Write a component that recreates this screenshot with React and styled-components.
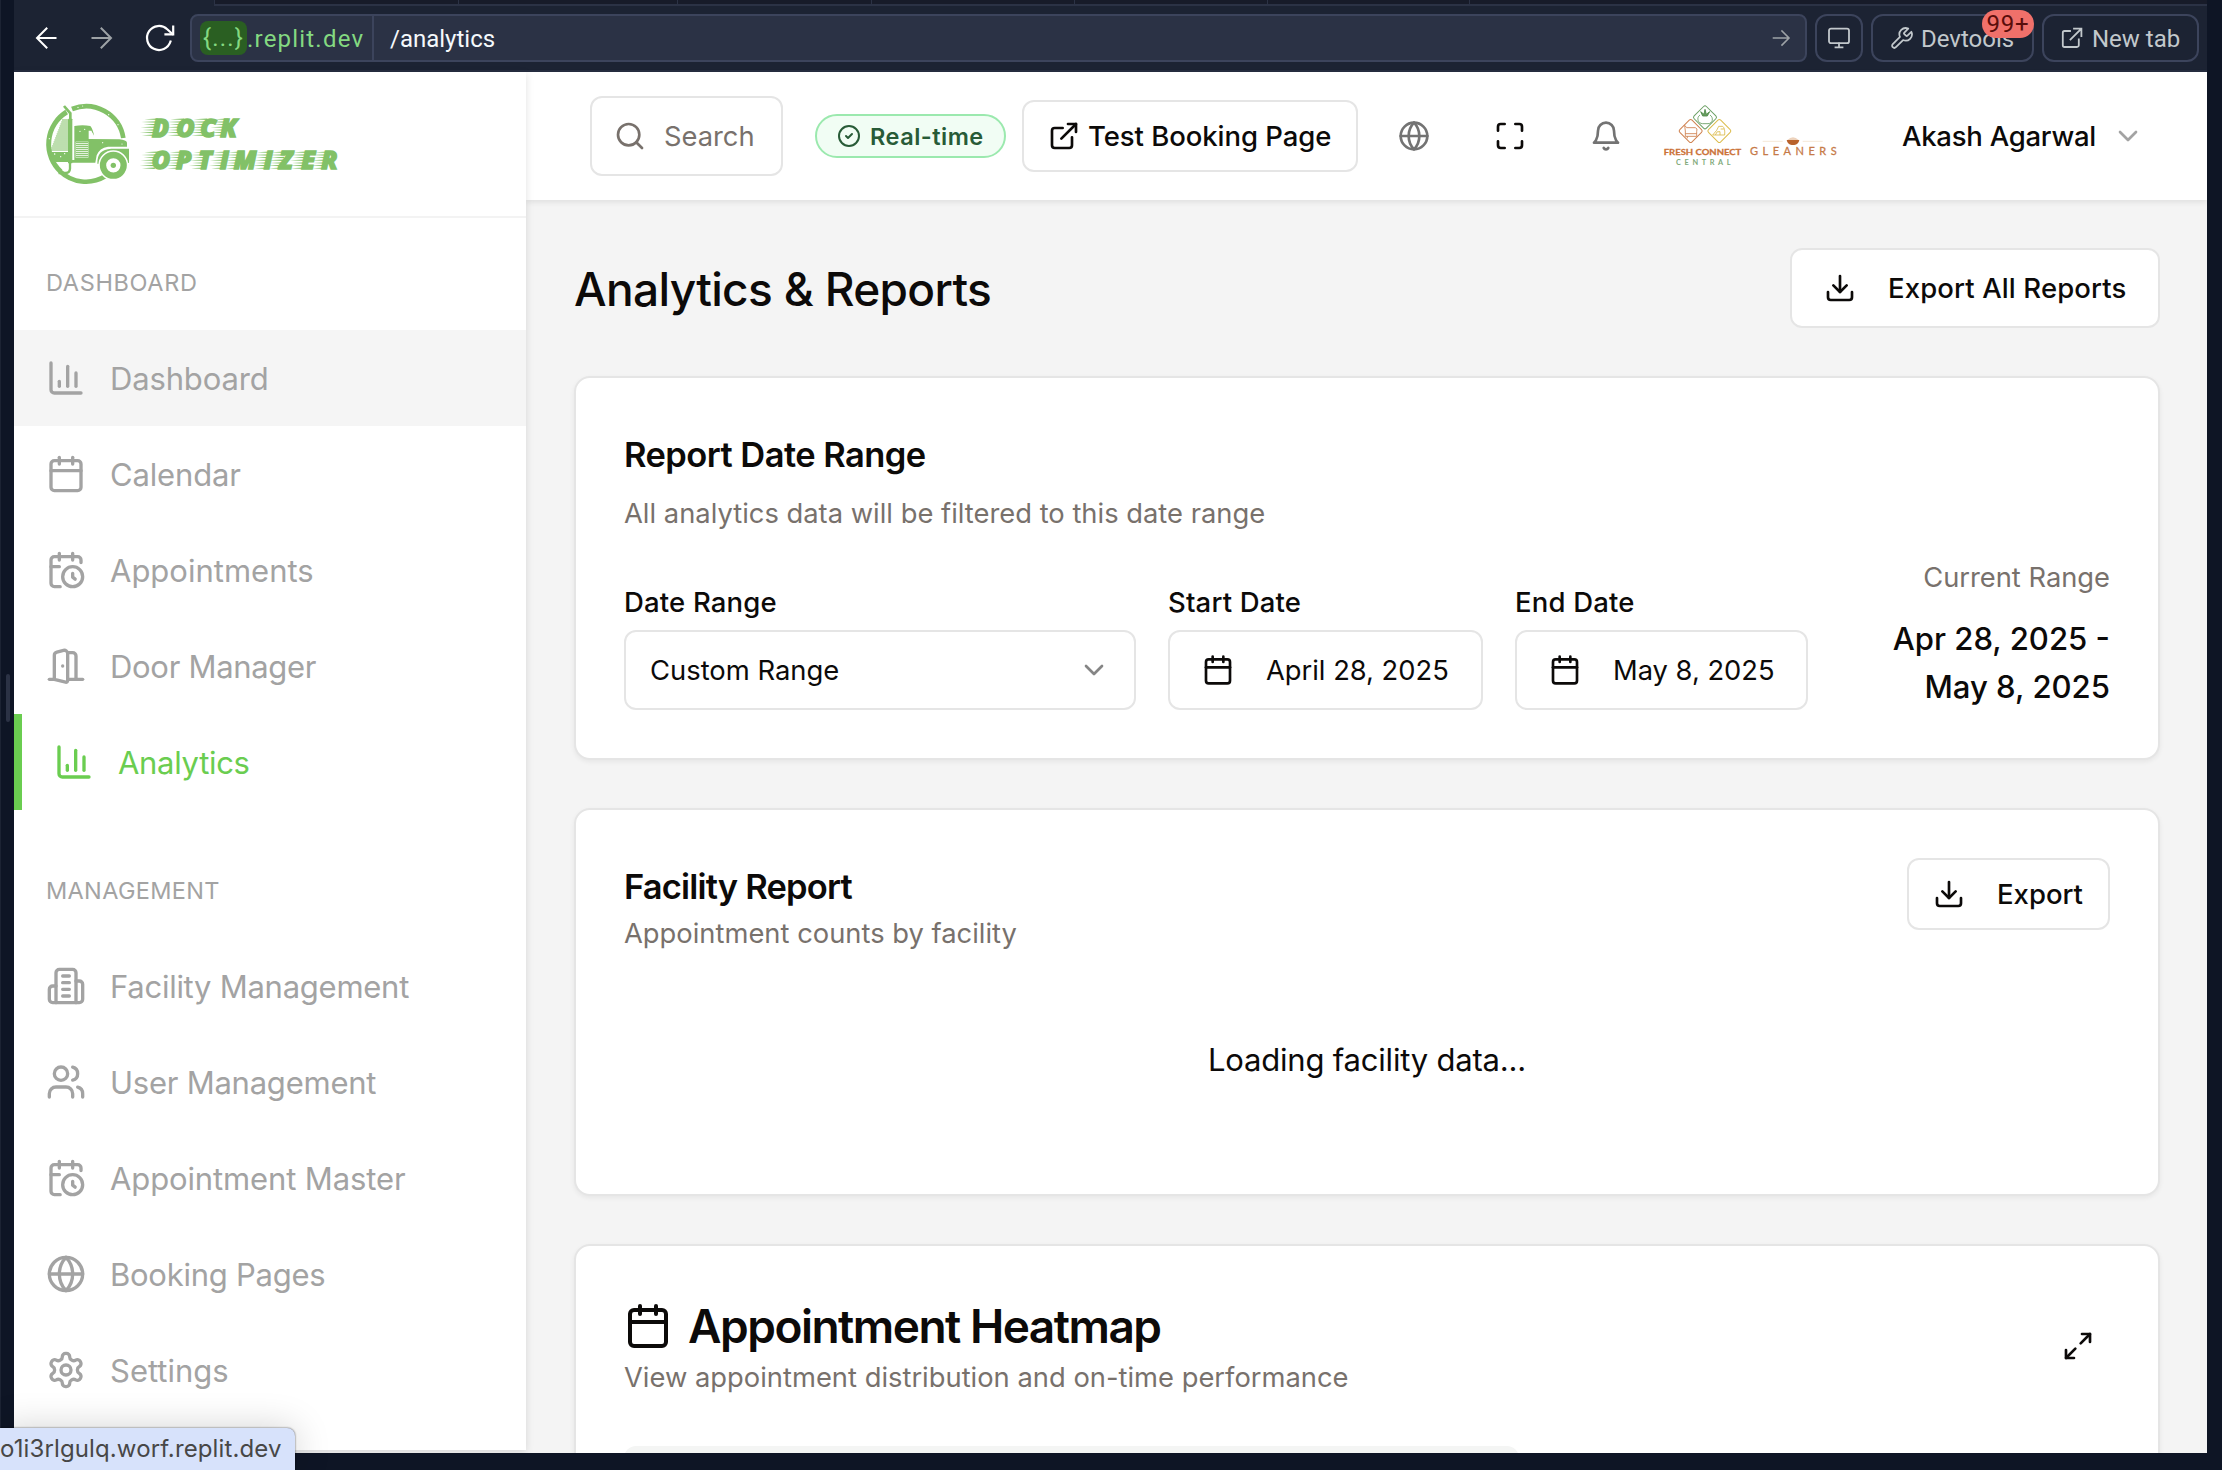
import React from 'react';
import styled, { createGlobalStyle } from 'styled-components';
import {
  Calendar,
  ChartColumn,
  ChevronDown,
  CircleCheck,
  Download,
  ExternalLink,
  Globe,
  Maximize,
  Maximize2,
  Search,
  Users,
} from 'lucide-react';

const GlobalStyle = createGlobalStyle`
  * { box-sizing: border-box; }
  html, body { margin: 0; padding: 0; overflow: hidden; background: #0e1525; }
  body {
    font-family: Inter, "Liberation Sans", sans-serif;
    color: #0c0a09;
    -webkit-font-smoothing: antialiased;
  }
  svg { display: block; flex: none; }
`;

/* ---------- icons ---------- */

const Stroke = ({ size = 32, width = 2, children }) => (
  <svg
    width={size}
    height={size}
    viewBox="0 0 24 24"
    fill="none"
    stroke="currentColor"
    strokeWidth={width}
    strokeLinecap="round"
    strokeLinejoin="round"
  >
    {children}
  </svg>
);

const DoorIcon = ({ size }) => (
  <Stroke size={size}>
    <path d="M13 4h3a2 2 0 0 1 2 2v14" />
    <path d="M2 20h3" />
    <path d="M13 20h9" />
    <path d="M10 12v.01" />
    <path d="M13 4.562v16.157a1 1 0 0 1-1.242.97L5 20V5.562a2 2 0 0 1 1.515-1.94l4-1A2 2 0 0 1 13 4.561Z" />
  </Stroke>
);

const BuildingIcon = ({ size }) => (
  <Stroke size={size}>
    <path d="M6 22V4a2 2 0 0 1 2-2h8a2 2 0 0 1 2 2v18Z" />
    <path d="M6 12H4a2 2 0 0 0-2 2v6a2 2 0 0 0 2 2h2" />
    <path d="M18 9h2a2 2 0 0 1 2 2v9a2 2 0 0 1-2 2h-2" />
    <path d="M10 6h4M10 10h4M10 14h4M10 18h4" />
  </Stroke>
);

const CalendarClockIcon = ({ size }) => (
  <Stroke size={size}>
    <path d="M21 7.5V6a2 2 0 0 0-2-2H5a2 2 0 0 0-2 2v14a2 2 0 0 0 2 2h3.5" />
    <path d="M16 2v4M8 2v4M3 10h5" />
    <path d="M17.5 17.5 16 16.3V14" />
    <circle cx="16" cy="16" r="6" />
  </Stroke>
);

const GearIcon = ({ size }) => (
  <Stroke size={size}>
    <path d="M12.22 2h-.44a2 2 0 0 0-2 2v.18a2 2 0 0 1-1 1.73l-.43.25a2 2 0 0 1-2 0l-.15-.08a2 2 0 0 0-2.73.73l-.22.38a2 2 0 0 0 .73 2.73l.15.1a2 2 0 0 1 1 1.72v.51a2 2 0 0 1-1 1.74l-.15.09a2 2 0 0 0-.73 2.73l.22.38a2 2 0 0 0 2.73.73l.15-.08a2 2 0 0 1 2 0l.43.25a2 2 0 0 1 1 1.73V20a2 2 0 0 0 2 2h.44a2 2 0 0 0 2-2v-.18a2 2 0 0 1 1-1.73l.43-.25a2 2 0 0 1 2 0l.15.08a2 2 0 0 0 2.73-.73l.22-.39a2 2 0 0 0-.73-2.73l-.15-.08a2 2 0 0 1-1-1.74v-.5a2 2 0 0 1 1-1.74l.15-.09a2 2 0 0 0 .73-2.73l-.22-.38a2 2 0 0 0-2.73-.73l-.15.08a2 2 0 0 1-2 0l-.43-.25a2 2 0 0 1-1-1.73V4a2 2 0 0 0-2-2z" />
    <circle cx="12" cy="12" r="3" />
  </Stroke>
);

const BellIcon = () => (
  <Stroke size={32}>
    <path d="M6 8a6 6 0 0 1 12 0c0 7 3 9 3 9H3s3-2 3-9" />
    <path d="M10.3 21a1.94 1.94 0 0 0 3.4 0" />
  </Stroke>
);

const BarSvg = ({ w = 24, h = 24, children, sw = 2 }) => (
  <svg
    width={w}
    height={h}
    viewBox={`0 0 ${w} ${h}`}
    fill="none"
    stroke="currentColor"
    strokeWidth={sw}
    strokeLinecap="square"
    strokeLinejoin="miter"
  >
    {children}
  </svg>
);

const ArrowLeftIcon = () => (
  <BarSvg>
    <path d="M3.5 12H21.5M12.5 2.5 3 12l9.5 9.5" />
  </BarSvg>
);
const ArrowRightIcon = () => (
  <BarSvg>
    <path d="M2.5 12H20.5M11.5 2.5 21 12l-9.5 9.5" />
  </BarSvg>
);
const ReloadIcon = () => (
  <BarSvg w={32} h={30} sw={2.2}>
    <path d="M26.5 18.5A12 12 0 1 1 23.2 6.2L28.5 11" />
    <path d="M29.2 3.5V11.3H21.5" />
  </BarSvg>
);
const GoIcon = () => (
  <BarSvg w={20} h={18} sw={1.6}>
    <path d="M2.5 9H17.5M11 2l7 7-7 7" />
  </BarSvg>
);
const MonitorIcon = () => (
  <BarSvg w={24} h={22} sw={1.8}>
    <rect x="2" y="1.6" width="20" height="14.6" rx="2" />
    <path d="M12 16.5V20.2M8.5 20.3H15.5" />
  </BarSvg>
);
const WrenchIcon = () => (
  <Stroke size={25} width={1.7}>
    <path d="M14.7 6.3a1 1 0 0 0 0 1.4l1.6 1.6a1 1 0 0 0 1.4 0l3.77-3.77a6 6 0 0 1-7.94 7.94l-6.91 6.91a2.12 2.12 0 0 1-3-3l6.91-6.91a6 6 0 0 1 7.94-7.94l-3.76 3.76z" />
  </Stroke>
);
const NewTabIcon = () => (
  <BarSvg w={22} h={22} sw={1.8}>
    <path d="M9 4H3.5A1.8 1.8 0 0 0 1.8 5.8V18.2A1.8 1.8 0 0 0 3.5 20H16a1.8 1.8 0 0 0 1.8-1.8V12.5" />
    <path d="M13 1.6H20.4V9M20 2 9.5 12.5" />
  </BarSvg>
);

/* ---------- logos ---------- */

const GREEN = '#82c167';

const range = (from, to, step) => {
  const out = [];
  for (let v = from; v <= to; v += step) out.push(v);
  return out;
};

const SpeedLines = ({ starts, top }) => (
  <g>
    {starts.map((x) =>
      [0, 1, 2, 3, 4, 5, 6].map((i) => (
        <polygon
          key={`${x}-${i}`}
          fill={GREEN}
          points={`${x - 27 - (i % 2) * 8 - i * 1.2},${top + 4 + i * 8} ${x + 14 - i * 1.6},${top + 1.4 + i * 8} ${x + 14 - i * 1.6},${top + 6 + i * 8}`}
        />
      ))
    )}
  </g>
);

const LogoWord = ({ y, xs, children }) => (
  <text
    x={xs.join(' ')}
    y={y}
    fill={GREEN}
    stroke={GREEN}
    strokeWidth="4"
    fontFamily='"Open Sans", "Noto Sans", sans-serif'
    fontWeight="800"
    fontStyle="italic"
    fontSize="75"
  >
    {children}
  </text>
);

const DockLogo = () => (
  <svg width="320" height="100" viewBox="0 0 960 300">
    <g fill="none" stroke={GREEN}>
      <path d="M108 51A113 113 0 0 1 262 138" strokeWidth="14" />
      <path d="M92 60A113 113 0 0 0 74 239" strokeWidth="15" />
      <path d="M72 238A113 113 0 0 0 208 253" strokeWidth="14" />
      <path d="M84 42L103 64V84" strokeWidth="8" />
      <path d="M102 205V230Q101 243 90 243H68" strokeWidth="7" />
      {range(84, 176, 6).map((y) => (
        <path key={y} d={`M${78 - (y - 84) * 0.38} ${y}H96`} strokeWidth="3.2" />
      ))}
    </g>
    <path d="M42 180H98V210H60L48 206Z" fill={GREEN} />
    <rect x="96" y="80" width="13" height="134" rx="2" fill={GREEN} />
    <path d="M115 102Q140 98 163 102Q171 112 174 131L166 116H158V141L250 142Q271 144 273 152V164H216Q190 168 182 190L178 212H98V204H115Z" fill={GREEN} />
    <path d="M160 138L166 118L174 136Z" fill="#fff" />
    <rect x="119" y="149" width="38" height="48" fill="#fff" />
    <g stroke={GREEN} strokeWidth="3.4">
      {range(152, 194, 6).map((y) => (
        <path key={y} d={`M120 ${y}H156`} />
      ))}
    </g>
    <path d="M184 215Q182 172 226 170H279V212L274 214Q270 180 234 178Q197 180 190 215Z" fill={GREEN} />
    <circle cx="232" cy="220" r="45" fill="#fff" />
    <circle cx="232" cy="220" r="31" fill="none" stroke={GREEN} strokeWidth="19" />
    <circle cx="232" cy="220" r="8" fill={GREEN} />
    <g fill="#fff">
      <circle cx="126" cy="46" r="2" />
      <circle cx="140" cy="42" r="1.6" />
      <circle cx="218" cy="68" r="2" />
      <circle cx="246" cy="98" r="1.8" />
      <circle cx="56" cy="186" r="2.4" />
      <circle cx="74" cy="194" r="2" />
      <circle cx="86" cy="185" r="2" />
      <circle cx="40" cy="140" r="1.8" />
      <circle cx="132" cy="118" r="2" />
      <circle cx="146" cy="112" r="2" />
      <circle cx="200" cy="152" r="1.8" />
      <circle cx="258" cy="156" r="1.8" />
    </g>
    <SpeedLines starts={[352, 430, 500, 562]} top={78} />
    <SpeedLines starts={[352, 428, 500, 560, 604, 690, 734, 800, 864]} top={177} />
    <LogoWord y={134} xs={[348, 421, 493, 553]}>DOCK</LogoWord>
    <LogoWord y={232} xs={[347, 420, 487, 552, 593, 683, 730, 796, 856]}>OPTIMIZER</LogoWord>
  </svg>
);

const Diamond = ({ cx, cy, color }) => (
  <rect
    x={cx - 26}
    y={cy - 26}
    width="52"
    height="52"
    rx="6"
    transform={`rotate(45 ${cx} ${cy})`}
    fill="none"
    stroke={color}
    strokeWidth="3"
  />
);

const PartnerLogo = () => (
  <svg width="176" height="90" viewBox="36 0 528 270">
    <Diamond cx={165} cy={79} color="#6a9f63" />
    <Diamond cx={122} cy={120} color="#cf8250" />
    <Diamond cx={208} cy={120} color="#dcbc4c" />
    <g fill="none" strokeWidth="2.6">
      <path d="M150 72C138 80 144 98 158 98H174C188 98 192 80 180 72" stroke="#6a9f63" />
      <path d="M152 62L162 70L165 55L169 70L179 62L172 75H158Z" stroke="#4f8a49" fill="#6a9f63" />
      <path d="M104 103L110 110H136Q144 112 140 122V136H106V120ZM106 128H140M112 136V142" stroke="#cf8250" />
      <path d="M188 132L200 118L206 106H218Q226 112 224 132ZM196 132Q200 118 210 122V132M212 114H222" stroke="#dcbc4c" />
    </g>
    <text x="41" y="192" textLength="233" lengthAdjust="spacingAndGlyphs" fontFamily="Lato, sans-serif" fontWeight="700" fontSize="25" fill="#cb7237" stroke="#cb7237" strokeWidth="0.8">FRESH CONNECT</text>
    <text x="78" y="221" textLength="164" fontFamily="Lato, sans-serif" fontWeight="700" fontSize="22" fill="#7fa97a">CENTRAL</text>
    <path d="M338 151H398M458 151H518" stroke="#f3e3cf" strokeWidth="2.5" />
    <path d="M412 147Q429 130 446 147Z" fill="#edd3bd" />
    <path d="M410 147H448Q445 161 433 162H425Q413 161 410 147Z" fill="#b9622c" />
    <text x="300" y="192" textLength="260" fontFamily="Lato, sans-serif" fontSize="33" fill="#c67a48" stroke="#c67a48" strokeWidth="0.8">GLEANERS</text>
  </svg>
);

/* ---------- browser shell ---------- */

const Shell = styled.div`
  display: flex;
  width: 2222px;
  height: 1470px;
  background: #0e1525;
  position: relative;
  overflow: hidden;
`;

const Gutter = styled.div`
  width: 14px;
  flex: none;
  padding: 674px 0 0 5px;
  border-left: 1px solid #1c2333;
`;

const Handle = styled.div`
  width: 4px;
  height: 48px;
  border-radius: 2px;
  background: #2b3245;
`;

const Pane = styled.div`
  width: 2193px;
  height: 1453px;
  display: flex;
  flex-direction: column;
  overflow: hidden;
`;

const Chrome = styled.div`
  height: 72px;
  flex: none;
  background: #1c2333;
  border-bottom: 2px solid #262d40;
`;

const TabStrip = styled.div`
  height: 6px;
  margin-left: 200px;
  display: flex;
  border-bottom: 2px solid #2b3245;
  background: #171b29;
`;

const TabCell = styled.div`
  width: ${(p) => p.$w}px;
  border-left: 1px solid #2b3245;
`;

const BarRow = styled.div`
  height: 48px;
  margin-top: 8px;
  padding: 0 8px 0 20px;
  display: flex;
  align-items: center;
  font-family: Roboto, "Noto Sans", sans-serif;
  font-size: 24px;
  color: #c2c8cc;
`;

const NavGroup = styled.div`
  width: 156px;
  display: flex;
  align-items: center;
`;

const NavGlyph = styled.span`
  width: ${(p) => p.$w}px;
  color: ${(p) => (p.$dim ? '#9da2a6' : '#ffffff')};
`;

const AddressBar = styled.div`
  flex: 1;
  height: 48px;
  display: flex;
  align-items: center;
  background: #2b3245;
  border: 2px solid #3c445c;
  border-radius: 8px;
  margin-right: 8px;
`;

const Domain = styled.div`
  width: 182px;
  height: 44px;
  padding-left: 8px;
  display: flex;
  align-items: center;
  border-right: 2px solid #3c445c;
  color: #84d981;
  letter-spacing: 1.2px;
  white-space: nowrap;
`;

const DomainChip = styled.span`
  width: 47px;
  height: 34px;
  line-height: 34px;
  text-align: center;
  border-radius: 8px;
  background: #2a5f22;
`;

const BarLabel = styled.span`
  padding-top: 2px;
`;

const PathText = styled(BarLabel)`
  flex: 1;
  padding-left: 16px;
  color: #f5f9fc;
`;

const GoSlot = styled.span`
  padding-right: 14px;
  color: #9da2a6;
`;

const BarButton = styled.div`
  position: relative;
  width: ${(p) => p.$w}px;
  height: 48px;
  margin-left: ${(p) => p.$ml || 0}px;
  padding-left: ${(p) => p.$pl}px;
  display: flex;
  align-items: center;
  gap: ${(p) => p.$gap || 0}px;
  border: 2px solid #3c445c;
  border-radius: 12px;
  white-space: nowrap;
`;

const CountBadge = styled.span`
  position: absolute;
  right: -2px;
  top: -6px;
  width: 52px;
  height: 28px;
  line-height: 29px;
  border-radius: 14px;
  text-align: center;
  background: #f0706a;
  color: #5a0d0b;
  font-size: 24px;
  letter-spacing: 0.8px;
`;

const StatusBubble = styled.div`
  position: absolute;
  z-index: 2;
  left: 0;
  bottom: 0;
  width: 295px;
  height: 42px;
  line-height: 42px;
  border-top-right-radius: 8px;
  background: #d7e2fb;
  color: #474747;
  font-size: 24px;
  letter-spacing: 0.12px;
  box-shadow: 0 0 2px rgba(0, 0, 0, 0.7), 0 0 36px rgba(0, 0, 0, 0.18);
  white-space: nowrap;
`;

/* ---------- application ---------- */

const AppBody = styled.div`
  flex: 1;
  min-height: 0;
  display: flex;
  background: #f4f4f4;
`;

const Sidebar = styled.aside`
  position: relative;
  width: 512px;
  height: 1378px;
  flex: none;
  background: #fff;
  box-shadow: 0 2px 8px rgba(0, 0, 0, 0.12);
  z-index: 1;
`;

const Brand = styled.div`
  height: 146px;
  padding: 20px 0 0 22px;
  border-bottom: 2px solid #f3f3f3;
`;

const Section = styled.section`
  padding: 41px 0 16px;
`;

const SectionLabel = styled.div`
  height: 47px;
  line-height: 47px;
  margin-bottom: 24px;
  padding-left: 32px;
  font-size: 23.5px;
  letter-spacing: ${(p) => p.$track}px;
  color: #a3a3a3;
`;

const NavRow = styled.div`
  height: 96px;
  display: flex;
  align-items: center;
  gap: 24px;
  padding-left: 32px;
  font-size: 31px;
  letter-spacing: ${(p) => p.$track ?? -0.15}px;
  color: ${(p) => (p.$active ? '#6acd50' : '#a3a3a3')};
  background: ${(p) => (p.$hovered ? '#f5f5f5' : 'transparent')};
  border-left: ${(p) => (p.$active ? '8px solid #6acd50' : '0')};
`;

const Content = styled.div`
  flex: 1;
  min-width: 0;
  display: flex;
  flex-direction: column;
`;

const Header = styled.header`
  height: 128px;
  flex: none;
  display: flex;
  align-items: center;
  padding-left: 64px;
  background: #fff;
  box-shadow: 0 2px 6px rgba(0, 0, 0, 0.09);
`;

const SearchBox = styled.div`
  width: 193px;
  height: 80px;
  display: flex;
  align-items: center;
  gap: 18px;
  padding-left: 22px;
  border: 2px solid #e5e5e5;
  border-radius: 12px;
  font-size: 27.3px;
  color: #78716c;
`;

const LivePill = styled.div`
  width: 191px;
  height: 44px;
  margin: 0 16px 0 32px;
  display: flex;
  align-items: center;
  gap: 9px;
  padding-left: 20px;
  border: 2px solid #9be9ae;
  border-radius: 22px;
  background: #f1fdf4;
  color: #285b37;
  font-size: 23.5px;
  font-weight: 600;
  letter-spacing: 0.5px;
`;

const OutlineButton = styled.div`
  width: ${(p) => p.$w}px;
  height: ${(p) => p.$h}px;
  flex: none;
  display: flex;
  align-items: center;
  gap: ${(p) => p.$gap}px;
  padding-left: ${(p) => p.$pl}px;
  border: 2px solid #e5e5e5;
  border-radius: 12px;
  background: #fff;
  font-size: ${(p) => (p.$regular ? 27.3 : 27.5)}px;
  font-weight: ${(p) => (p.$regular ? 400 : 500)};
  letter-spacing: ${(p) => p.$track || 0}px;
  white-space: nowrap;
`;

const IconButton = styled.div`
  width: 80px;
  height: 80px;
  margin-left: 16px;
  display: flex;
  align-items: center;
  justify-content: center;
  color: ${(p) => (p.$strong ? '#0c0a09' : '#737373')};
`;

const PartnerSlot = styled.div`
  margin-left: 16px;
`;

const UserMenu = styled.div`
  margin-left: 64px;
  display: flex;
  align-items: center;
  gap: 16px;
  font-size: 27.5px;
  font-weight: 500;
  letter-spacing: -0.25px;
  white-space: nowrap;
  svg { color: #a3a3a3; }
`;

const Main = styled.main`
  flex: 1;
  min-height: 0;
  overflow: hidden;
  padding: 48px 47px 0 48px;
  display: flex;
  flex-direction: column;
  gap: 48px;
`;

const TitleRow = styled.div`
  height: 80px;
  flex: none;
  display: flex;
  align-items: center;
  justify-content: space-between;
`;

const PageTitle = styled.h1`
  margin: 2px 0 0;
  font-size: 46px;
  font-weight: 500;
  letter-spacing: -0.66px;
`;

const Card = styled.section`
  height: ${(p) => p.$h}px;
  flex: none;
  display: flex;
  flex-direction: column;
  padding: 48px;
  border: 2px solid #e5e5e5;
  border-radius: 16px;
  background: #fff;
  box-shadow: 0 2px 5px rgba(0, 0, 0, 0.06);
`;

const CardHeader = styled.div`
  display: flex;
  justify-content: space-between;
  align-items: ${(p) => p.$align || 'flex-start'};
`;

const CardTitle = styled.h2`
  margin: 0;
  display: flex;
  align-items: center;
  gap: 16px;
  height: ${(p) => (p.$big ? 64 : 56)}px;
  font-size: ${(p) => (p.$big ? 46 : 34.5)}px;
  font-weight: 600;
  letter-spacing: ${(p) => p.$track}px;
`;

const CardNote = styled.p`
  margin: ${(p) => p.$mt || 0}px 0 0;
  height: 40px;
  line-height: 40px;
  font-size: 27.35px;
  color: #78716c;
`;

const FilterRow = styled.div`
  flex: 1;
  display: flex;
  align-items: flex-end;
  gap: 32px;
`;

const Field = styled.div`
  display: flex;
  flex-direction: column;
  gap: 14px;
`;

const FieldLabel = styled.label`
  height: 28px;
  line-height: 28px;
  font-size: 27.5px;
  font-weight: 500;
  letter-spacing: 0.18px;
`;

const SelectBox = styled.div`
  width: 512px;
  height: 80px;
  display: flex;
  align-items: center;
  justify-content: space-between;
  padding: 0 24px;
  border: 2px solid #e5e5e5;
  border-radius: 12px;
  font-size: 27.4px;
  svg { color: #858585; }
`;

const RangeSummary = styled.div`
  margin-left: auto;
  width: 250px;
  text-align: right;
  margin-bottom: -1px;
`;

const RangeLabel = styled.div`
  height: 40px;
  line-height: 40px;
  margin-bottom: 17px;
  font-size: 27.3px;
  color: #78716c;
`;

const RangeValue = styled.div`
  line-height: 48px;
  font-size: 31.1px;
  font-weight: 500;
`;

const Loading = styled.div`
  flex: 1;
  padding-top: 18px;
  display: flex;
  align-items: center;
  justify-content: center;
  font-size: 31px;
  letter-spacing: -0.2px;
`;

const ExpandButton = styled.div`
  width: 64px;
  height: 64px;
  display: flex;
  align-items: center;
  justify-content: center;
`;

const FilterPanel = styled.div`
  width: 895px;
  height: 120px;
  margin-top: 48px;
  border-radius: 12px;
  background: #f4f5f4;
`;

const dashboardLinks = [
  { label: 'Dashboard', Icon: ChartColumn, hovered: true },
  { label: 'Calendar', Icon: Calendar },
  { label: 'Appointments', Icon: CalendarClockIcon, track: 0 },
  { label: 'Door Manager', Icon: DoorIcon, track: -0.3 },
  { label: 'Analytics', Icon: ChartColumn, active: true, track: -0.3 },
];

const managementLinks = [
  { label: 'Facility Management', Icon: BuildingIcon, track: -0.26 },
  { label: 'User Management', Icon: Users, track: -0.24 },
  { label: 'Appointment Master', Icon: CalendarClockIcon, track: -0.12 },
  { label: 'Booking Pages', Icon: Globe, track: -0.26 },
  { label: 'Settings', Icon: GearIcon, track: 0 },
];

const NavSection = ({ title, track, links }) => (
  <Section>
    <SectionLabel $track={track}>{title}</SectionLabel>
    {links.map(({ label, Icon, hovered, active, track: rowTrack }) => (
      <NavRow key={label} $hovered={hovered} $active={active} $track={rowTrack}>
        <Icon size={40} />
        {label}
      </NavRow>
    ))}
  </Section>
);

export default function App() {
  return (
    <>
      <GlobalStyle />
      <Shell>
        <Gutter>
          <Handle />
        </Gutter>
        <Pane>
          <Chrome>
            <TabStrip>
              {[244, 219, 194, 203, 193, 202, 200].map((w, i) => (
                <TabCell key={i} $w={w} />
              ))}
            </TabStrip>
            <BarRow>
              <NavGroup>
                <NavGlyph $w={56}><ArrowLeftIcon /></NavGlyph>
                <NavGlyph $w={54} $dim><ArrowRightIcon /></NavGlyph>
                <NavGlyph $w={46}><ReloadIcon /></NavGlyph>
              </NavGroup>
              <AddressBar>
                <Domain>
                  <DomainChip>{'{...}'}</DomainChip>
                  <BarLabel>.replit.dev</BarLabel>
                </Domain>
                <PathText>/analytics</PathText>
                <GoSlot><GoIcon /></GoSlot>
              </AddressBar>
              <BarButton $w={48} $pl={10}>
                <MonitorIcon />
              </BarButton>
              <BarButton $w={163} $ml={8} $pl={16} $gap={7}>
                <WrenchIcon />
                <BarLabel>Devtools</BarLabel>
                <CountBadge>99+</CountBadge>
              </BarButton>
              <BarButton $w={157} $ml={8} $pl={17} $gap={9}>
                <NewTabIcon />
                <BarLabel>New tab</BarLabel>
              </BarButton>
            </BarRow>
          </Chrome>
          <AppBody>
            <Sidebar>
              <Brand>
                <DockLogo />
              </Brand>
              <NavSection title="DASHBOARD" track={0.65} links={dashboardLinks} />
              <NavSection title="MANAGEMENT" track={0.33} links={managementLinks} />
            </Sidebar>
            <Content>
              <Header>
                <SearchBox>
                  <Search size={32} strokeWidth={2} />
                  Search
                </SearchBox>
                <LivePill>
                  <CircleCheck size={24} />
                  Real-time
                </LivePill>
                <OutlineButton $w={336} $h={72} $pl={24} $gap={8} $track={-0.06}>
                  <ExternalLink size={32} />
                  Test Booking Page
                </OutlineButton>
                <IconButton><Globe size={32} /></IconButton>
                <IconButton $strong><Maximize size={32} /></IconButton>
                <IconButton><BellIcon /></IconButton>
                <PartnerSlot><PartnerLogo /></PartnerSlot>
                <UserMenu>
                  Akash Agarwal
                  <ChevronDown size={32} />
                </UserMenu>
              </Header>
              <Main>
                <TitleRow>
                  <PageTitle>Analytics &amp; Reports</PageTitle>
                  <OutlineButton $w={370} $h={80} $pl={32} $gap={32} $track={0.12}>
                    <Download size={32} />
                    Export All Reports
                  </OutlineButton>
                </TitleRow>

                <Card $h={384}>
                  <CardTitle $track={-0.56}>Report Date Range</CardTitle>
                  <CardNote $mt={12}>All analytics data will be filtered to this date range</CardNote>
                  <FilterRow>
                    <Field>
                      <FieldLabel>Date Range</FieldLabel>
                      <SelectBox>
                        Custom Range
                        <ChevronDown size={32} />
                      </SelectBox>
                    </Field>
                    <Field>
                      <FieldLabel>Start Date</FieldLabel>
                      <OutlineButton $w={315} $h={80} $pl={32} $gap={32} $regular>
                        <Calendar size={32} />
                        April 28, 2025
                      </OutlineButton>
                    </Field>
                    <Field>
                      <FieldLabel>End Date</FieldLabel>
                      <OutlineButton $w={293} $h={80} $pl={32} $gap={32} $regular>
                        <Calendar size={32} />
                        May 8, 2025
                      </OutlineButton>
                    </Field>
                    <RangeSummary>
                      <RangeLabel>Current Range</RangeLabel>
                      <RangeValue>
                        Apr 28, 2025 -<br />
                        May 8, 2025
                      </RangeValue>
                    </RangeSummary>
                  </FilterRow>
                </Card>

                <Card $h={388}>
                  <CardHeader>
                    <div>
                      <CardTitle $track={-0.82}>Facility Report</CardTitle>
                      <CardNote>Appointment counts by facility</CardNote>
                    </div>
                    <OutlineButton $w={203} $h={72} $pl={24} $gap={32}>
                      <Download size={32} />
                      Export
                    </OutlineButton>
                  </CardHeader>
                  <Loading>Loading facility data...</Loading>
                </Card>

                <Card $h={700}>
                  <CardHeader $align="center">
                    <div>
                      <CardTitle $big $track={-1.5}>
                        <Calendar size={48} />
                        Appointment Heatmap
                      </CardTitle>
                      <CardNote>View appointment distribution and on-time performance</CardNote>
                    </div>
                    <ExpandButton><Maximize2 size={32} /></ExpandButton>
                  </CardHeader>
                  <FilterPanel />
                </Card>
              </Main>
            </Content>
          </AppBody>
        </Pane>
        <StatusBubble>o1i3rlgulq.worf.replit.dev</StatusBubble>
      </Shell>
    </>
  );
}
